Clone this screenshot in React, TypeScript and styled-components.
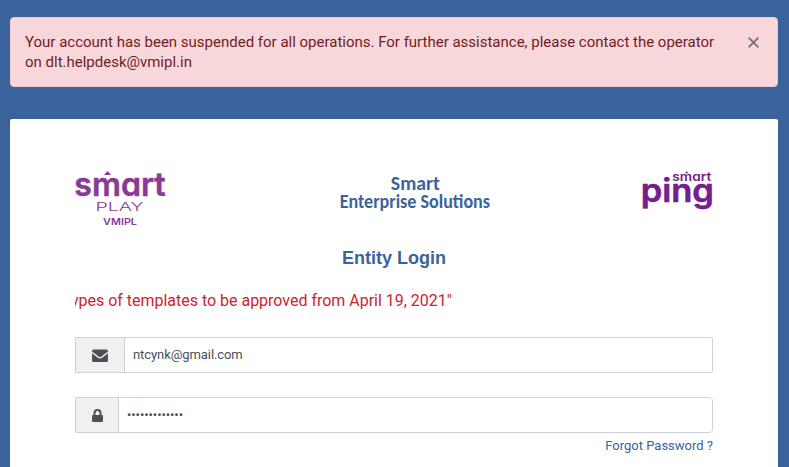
import React from "react";
import styled, { createGlobalStyle } from "styled-components";

const GlobalStyle = createGlobalStyle`
  *, *::before, *::after { box-sizing: border-box; }
  body {
    margin: 0;
    background: #3a639b;
    font-family: Roboto, "Liberation Sans", sans-serif;
    overflow: hidden;
  }
`;

const Page = styled.main`
  height: 467px;
  overflow: hidden;
  padding: 17px 11px 0 10px;
  display: flex;
  flex-direction: column;
  gap: 32px;
`;

const Alert = styled.div`
  flex: none;
  display: flex;
  justify-content: space-between;
  align-items: flex-start;
  height: 70px;
  padding: 14px 18px 0 14px;
  border: 1px solid #f5c6cb;
  border-radius: 4px;
  background: #f8d7da;
  color: #721c24;
`;

const AlertText = styled.p`
  margin: 0;
  width: 700px;
  font-size: 15px;
  line-height: 20px;
  letter-spacing: -0.005px;
`;

const CloseButton = styled.button`
  display: flex;
  margin-top: 5px;
  padding: 0;
  border: 0;
  background: none;
  color: #7c6c6d;
`;

const Card = styled.section`
  flex: none;
  height: 400px;
  padding: 49px 65px 0;
  border-radius: 2px;
  background: #fff;
`;

const Brands = styled.header`
  display: grid;
  grid-template-columns: 265px 1fr 71px;
  height: 62px;
`;

const Logo = styled.svg`
  display: block;
  flex: none;
  overflow: visible;
`;

const RoundLogo = styled(Logo)`
  font-family: Inter, sans-serif;
  font-feature-settings: "cv11" 1, "ss03" 1;
`;

const Title = styled.h1`
  margin: 17px 0 0;
  text-align: center;
  font: bold 18px/22px "Liberation Sans", Arial, sans-serif;
  color: #3a639b;
`;

const Ticker = styled.div`
  margin-top: 19px;
  height: 24px;
  overflow: hidden;
  white-space: nowrap;
  font-size: 16px;
  line-height: 25px;
  letter-spacing: -0.015px;
  color: #cb2431;
`;

const TickerText = styled.span`
  display: inline-block;
  margin-left: -4px;
`;

const Form = styled.form`
  margin-top: 25px;
  display: flex;
  flex-direction: column;
  gap: 24px;
`;

const Field = styled.div<{ $radius: number }>`
  display: flex;
  height: 36px;
  border: 1px solid #ced0da;
  border-radius: 0 ${(p) => p.$radius}px ${(p) => p.$radius}px 0;
  overflow: hidden;
`;

const Addon = styled.span<{ $width: number }>`
  flex: none;
  width: ${(p) => p.$width}px;
  display: flex;
  align-items: center;
  justify-content: center;
  border-right: 1px solid #ced0da;
  background: #f0f0f0;
  color: #495057;
`;

const Input = styled.input`
  flex: 1;
  min-width: 0;
  padding: 0 8px 1px;
  border: 0;
  outline: 0;
  background: #fff;
  font-family: Roboto, sans-serif;
  font-size: 13px;
  letter-spacing: -0.08px;
  color: #495057;
`;

const Forgot = styled.a`
  display: block;
  margin-top: 4px;
  text-align: right;
  font-size: 13px;
  line-height: 18px;
  color: #3a639b;
`;

const SmartPlayLogo = () => (
  <RoundLogo width="92" height="62" viewBox="0 0 92 62" fill="#8a3a96">
    <path d="M29 7 32.500 3l3.500 4z" />
    <text x="-.8" y="27.700" fontSize="33" fontWeight="600" stroke="#8a3a96" strokeWidth=".5" strokeLinejoin="round" textLength="91.500" lengthAdjust="spacingAndGlyphs">smart</text>
    <text x="20.500" y="42.700" fontSize="12" fontWeight="300" textLength="48" lengthAdjust="spacingAndGlyphs">PLAY</text>
    <text x="28" y="57" fontSize="9.500" fontWeight="600" textLength="34" lengthAdjust="spacingAndGlyphs">VMIPL</text>
  </RoundLogo>
);

const EnterpriseLogo = () => (
  <Logo width="152" height="62" viewBox="0 0 152 62" fill="#3a639b" fontFamily="Carlito, Lato, sans-serif" fontWeight="700" fontSize="18.500">
    <text transform="translate(50.800 22) scale(.9 1.040)" textLength="54.500" lengthAdjust="spacingAndGlyphs">Smart</text>
    <text transform="translate(-.3 40) scale(.9 1.040)" textLength="167" lengthAdjust="spacingAndGlyphs">Enterprise Solutions</text>
  </Logo>
);

const SmartPingLogo = () => (
  <RoundLogo width="71" height="62" viewBox="0 0 71 62" fill="#75208a">
    <path d="m43 5.200 1.700-2 1.700 2z" />
    <text x="30.300" y="13.300" fontSize="12.500" fontWeight="600" textLength="39" lengthAdjust="spacingAndGlyphs">smart</text>
    <text x="-1.300" y="33.700" fontSize="32" fontWeight="600" stroke="#75208a" strokeWidth=".6" strokeLinejoin="round" textLength="73.200" lengthAdjust="spacingAndGlyphs">ping</text>
  </RoundLogo>
);

const App = () => (
  <>
    <GlobalStyle />
    <Page>
      <Alert role="alert">
        <AlertText>
          Your account has been suspended for all operations. For further assistance, please contact the operator on dlt.helpdesk@vmipl.in
        </AlertText>
        <CloseButton aria-label="Close">
          <svg width="11" height="11" viewBox="0 0 11 11" fill="none" stroke="currentColor" strokeWidth="1.800">
            <path d="m.7.7 9.600 9.600M10.300.7.7 10.300" />
          </svg>
        </CloseButton>
      </Alert>
      <Card>
        <Brands>
          <SmartPlayLogo />
          <EnterpriseLogo />
          <SmartPingLogo />
        </Brands>
        <Title>Entity Login</Title>
        <Ticker>
          <TickerText>ypes of templates to be approved from April 19, 2021"</TickerText>
        </Ticker>
        <Form>
          <Field $radius={2}>
            <Addon $width={49}>
              <svg width="16" height="13" viewBox="0 0 16 13" fill="currentColor">
                <path d="M1.500.5h13A1.500 1.500 0 0 1 16 2v.5L9.400 7.600c-.9.7-1.900.7-2.800 0L0 2.500V2A1.500 1.500 0 0 1 1.500.5Z" />
                <path d="M0 4.200 5.900 8.800c1.300 1 2.900 1 4.200 0L16 4.200v7.300a1.500 1.500 0 0 1-1.500 1.500h-13A1.500 1.500 0 0 1 0 11.500Z" />
              </svg>
            </Addon>
            <Input type="text" aria-label="Email" defaultValue="ntcynk@gmail.com" />
          </Field>
          <Field $radius={4}>
            <Addon $width={43}>
              <svg width="11" height="13" viewBox="0 0 11 13" fill="currentColor">
                <path fillRule="evenodd" d="M1.500 6V4a4 4 0 0 1 8 0v2h.3c.7 0 1.200.5 1.200 1.200v4.600c0 .7-.5 1.200-1.200 1.200H1.200C.5 13 0 12.500 0 11.800V7.200C0 6.500.5 6 1.200 6Zm2 0h4V4a2 2 0 0 0-4 0Z" />
              </svg>
            </Addon>
            <Input type="password" aria-label="Password" defaultValue="password12345" />
          </Field>
        </Form>
        <Forgot>Forgot Password ?</Forgot>
      </Card>
    </Page>
  </>
);

export default App;
